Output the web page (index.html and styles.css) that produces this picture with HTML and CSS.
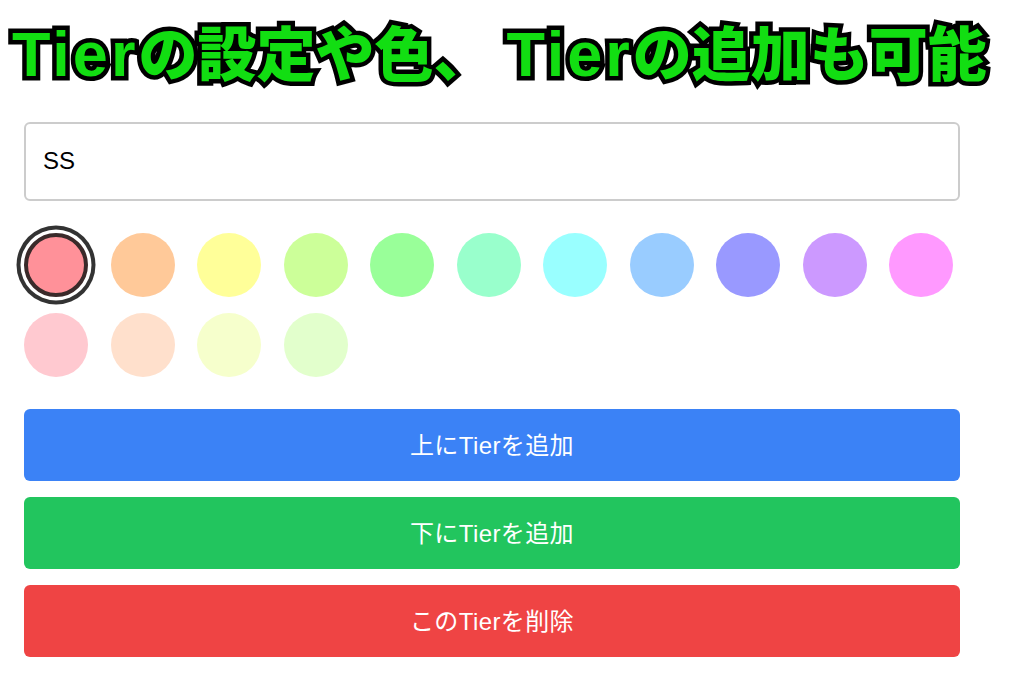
FILE: index.html
```html
<!DOCTYPE html>
<html lang="ja">
<head>
  <meta charset="UTF-8">
  <title>Tier設定</title>
  <link rel="stylesheet" href="styles.css">
</head>
<body>
  <h1 class="judul"><span class="latin">Tier</span>の設定や色、<span class="latin">Tier</span>の追加も可能</h1>

  <div class="panel">
    <input type="text" class="nama-tier" value="SS">

    <div class="warna-list">
      <div class="warna terpilih warna-1"></div>
      <div class="warna warna-2"></div>
      <div class="warna warna-3"></div>
      <div class="warna warna-4"></div>
      <div class="warna warna-5"></div>
      <div class="warna warna-6"></div>
      <div class="warna warna-7"></div>
      <div class="warna warna-8"></div>
      <div class="warna warna-9"></div>
      <div class="warna warna-10"></div>
      <div class="warna warna-11"></div>
      <div class="warna warna-12"></div>
      <div class="warna warna-13"></div>
      <div class="warna warna-14"></div>
      <div class="warna warna-15"></div>
    </div>

    <button type="button" class="tombol biru">上にTierを追加</button>
    <button type="button" class="tombol hijau">下にTierを追加</button>
    <button type="button" class="tombol merah">このTierを削除</button>
  </div>
</body>
</html>
```

FILE: styles.css
```css
* {
  box-sizing: border-box;
}

body {
  font-family: "Liberation Sans", "Noto Sans CJK JP", sans-serif;
  background-color: #fff;
  margin: 0;
  color: #000;
}

.judul {
  margin: 0;
  padding: 20px 0 0 12px;
  height: 122px;
  font-family: "Liberation Sans", "Noto Sans CJK JP", sans-serif;
  font-size: 59px;
  font-weight: 900;
  line-height: 68px;
  white-space: nowrap;
  color: #12de12;
  -webkit-text-stroke: 9px #000;
  paint-order: stroke fill;
  text-shadow: 1px 2px 3px rgba(0, 0, 0, 0.4);
}

.latin {
  font-size: 63px;
  letter-spacing: 3px;
}

.latin + .latin {
  margin-left: 14px;
}

.panel {
  padding: 0 52px 0 24px;
  display: flex;
  flex-direction: column;
}

.nama-tier {
  width: 100%;
  height: 79px;
  padding: 0 17px 2px;
  border: 2px solid #ccc;
  border-radius: 6px;
  background-color: #fff;
  font-family: inherit;
  font-size: 24px;
  color: #000;
  outline: none;
}

.warna-list {
  display: flex;
  flex-wrap: wrap;
  column-gap: 22.5px;
  row-gap: 16px;
  margin-top: 32px;
  margin-bottom: 32px;
}

.warna {
  width: 64px;
  height: 64px;
  border-radius: 50%;
}

.terpilih {
  border: 4px solid #3a2a2a;
  box-shadow: 0 0 0 3.5px #fff, 0 0 0 7.5px #333;
}

.warna-1 { background-color: #ff9199; }
.warna-2 { background-color: #ffc999; }
.warna-3 { background-color: #ffff99; }
.warna-4 { background-color: #ccff99; }
.warna-5 { background-color: #99ff99; }
.warna-6 { background-color: #99ffcc; }
.warna-7 { background-color: #99ffff; }
.warna-8 { background-color: #99ccff; }
.warna-9 { background-color: #9999ff; }
.warna-10 { background-color: #cc99ff; }
.warna-11 { background-color: #ff99ff; }
.warna-12 { background-color: #ffc9d0; }
.warna-13 { background-color: #ffe0cc; }
.warna-14 { background-color: #f6ffcc; }
.warna-15 { background-color: #e2ffcc; }

.tombol {
  height: 72px;
  margin-bottom: 16px;
  padding-bottom: 4px;
  border: none;
  border-radius: 6px;
  font-family: inherit;
  font-size: 24px;
  letter-spacing: 0.4px;
  color: #fff;
  cursor: pointer;
}

.biru { background-color: #3b82f6; }
.hijau { background-color: #22c55e; }
.merah { background-color: #ef4444; }
```
